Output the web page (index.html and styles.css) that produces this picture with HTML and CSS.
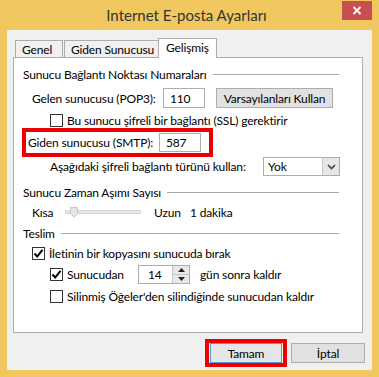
FILE: index.html
```html
<!DOCTYPE html>
<html lang="tr">
<head>
<meta charset="utf-8">
<title>Internet E-posta Ayarları</title>
<link rel="stylesheet" href="styles.css">
</head>
<body>
<div class="window">
  <div class="titlebar">
    <span></span>
    <span class="title">Internet E-posta Ayarları</span>
    <span class="close">
      <svg width="10" height="9" viewBox="0 0 10 9"><path d="M1.5 1 L8.5 8 M8.5 1 L1.5 8" stroke="#fff" stroke-width="1.8"/></svg>
    </span>
  </div>
  <div class="client">
    <div class="tabs">
      <div class="tab">Genel</div>
      <div class="tab">Giden Sunucusu</div>
      <div class="tab active">Gelişmiş</div>
    </div>
    <div class="panel">
      <div class="group"><span>Sunucu Bağlantı Noktası Numaraları</span><span class="rule"></span></div>

      <div class="row r-gelen">
        <span class="lbl">Gelen sunucusu (POP3):</span>
        <span class="input port">110</span>
        <span class="btn defaults">Varsayılanları Kullan</span>
      </div>

      <div class="row r-ssl">
        <span class="cb"></span>
        <span>Bu sunucu şifreli bir bağlantı (SSL) gerektirir</span>
      </div>

      <div class="row r-smtp">
        <span class="lbl">Giden sunucusu (SMTP):</span>
        <span class="input port">587</span>
      </div>

      <div class="row r-enc">
        <span class="enc-lbl">Aşağıdaki şifreli bağlantı türünü kullan:</span>
        <span class="select"><span class="sel-val">Yok</span><span class="sel-btn"><svg width="9" height="6" viewBox="0 0 9 6"><path d="M1 1 L4.5 4.5 L8 1" fill="none" stroke="#444" stroke-width="1.6"/></svg></span></span>
      </div>

      <div class="group g2"><span>Sunucu Zaman Aşımı Sayısı</span><span class="rule"></span></div>

      <div class="row r-time">
        <span class="kisa">Kısa</span>
        <span class="slider">
          <svg width="76" height="12" viewBox="0 0 76 12">
            <rect x="0.5" y="3.5" width="75" height="3" fill="#e7e7e7" stroke="#d6d6d6"/>
            <path d="M5.5 0.5 H12.5 V6.5 L9 10 L5.5 6.5 Z" fill="#e6e6e6" stroke="#c5c5c5"/>
          </svg>
        </span>
        <span class="uzun">Uzun</span>
        <span>1 dakika</span>
      </div>

      <div class="group g3"><span>Teslim</span><span class="rule"></span></div>

      <div class="row r-copy">
        <span class="cb checked"><svg width="11" height="11" viewBox="0 0 11 11"><path d="M1.5 5.5 L4.2 8.5 L9.5 1.8" fill="none" stroke="#000" stroke-width="2"/></svg></span>
        <span>İletinin bir kopyasını sunucuda bırak</span>
      </div>

      <div class="row r-days">
        <span class="cb checked"><svg width="11" height="11" viewBox="0 0 11 11"><path d="M1.5 5.5 L4.2 8.5 L9.5 1.8" fill="none" stroke="#000" stroke-width="2"/></svg></span>
        <span class="days-lbl">Sunucudan</span>
        <span class="spin">
          <span class="spin-val">14</span>
          <span class="spin-btns">
            <span class="sb"><svg width="7" height="4" viewBox="0 0 7 4"><path d="M0 4 L3.5 0 L7 4 Z" fill="#222"/></svg></span>
            <span class="sb"><svg width="7" height="4" viewBox="0 0 7 4"><path d="M0 0 L3.5 4 L7 0 Z" fill="#222"/></svg></span>
          </span>
        </span>
        <span class="after">gün sonra kaldır</span>
      </div>

      <div class="row r-del">
        <span class="cb"></span>
        <span>Silinmiş Öğeler'den silindiğinde sunucudan kaldır</span>
      </div>
    </div>
    <div class="footer">
      <span class="mark"><span class="btn ok">Tamam</span></span>
      <span class="btn cancel">İptal</span>
    </div>
  </div>
</div>
</body>
</html>
```

FILE: styles.css
```css
* { box-sizing: border-box; }
html, body { margin: 0; padding: 0; }
body {
  width: 379px;
  height: 377px;
  background: #f1c860;
  font-family: "Lato", "Noto Sans", sans-serif;
  font-size: 12px;
  letter-spacing: -0.15px;
  color: #000;
  overflow: hidden;
}
.window { width: 379px; height: 377px; }

.titlebar {
  height: 30px;
  display: grid;
  grid-template-columns: 1fr auto 1fr;
  align-items: start;
  padding-right: 7px;
}
.title {
  font-size: 15px;
  letter-spacing: 0;
  color: #333;
  line-height: 30px;
  padding-left: 1px;
}
.close {
  justify-self: end;
  margin-top: 1px;
  width: 30px;
  height: 19px;
  background: #c74f4f;
  display: flex;
  align-items: center;
  justify-content: center;
}

.client {
  margin: 0 7px;
  height: 340px;
  background: #f0f0f0;
  padding: 8px 7px 0 6px;
}

.tabs {
  display: flex;
  align-items: flex-end;
  height: 19px;
  padding-left: 2px;
  position: relative;
  z-index: 1;
}
.tab {
  height: 17px;
  border: 1px solid #acacac;
  border-bottom: none;
  background: #f0f0f0;
  padding: 0 6px;
  line-height: 17px;
  white-space: nowrap;
}
.tab + .tab { margin-left: 1px; }
.tab:nth-child(1) { width: 48px; }
.tab:nth-child(2) { width: 95px; }
.tab.active {
  width: 59px;
  margin-left: -1px;
  height: 20px;
  background: #fff;
  margin-bottom: -1px;
  line-height: 18px;
  padding-left: 7px;
}

.panel {
  margin-right: 2px;
  height: 276px;
  background: #fff;
  border: 1px solid #acacac;
  padding: 8px 0 0 9px;
}

.group {
  display: flex;
  align-items: center;
  height: 16px;
  padding-right: 23px;
}
.rule {
  flex: 1;
  height: 1px;
  background: #a8a8a8;
  margin-left: 6px;
  margin-top: 1px;
}
.g2 { margin-top: 8px; }
.g3 { margin-top: 5px; }

.row { display: flex; align-items: center; white-space: nowrap; }

.lbl { width: 131px; }
.r-gelen { margin-top: 5px; height: 22px; padding-left: 9px; }
.input {
  height: 20px;
  border: 1px solid #abadb3;
  background: #fff;
  display: flex;
  align-items: center;
  padding-left: 6px;
}
.port { width: 42px; }
.btn {
  display: inline-flex;
  align-items: center;
  justify-content: center;
  height: 20px;
  border: 1px solid #adadad;
  background: #e1e1e1;
}
.defaults { width: 117px; margin-left: 11px; }

.r-ssl { margin-top: 4px; height: 15px; padding-left: 27px; }
.cb {
  width: 13px;
  height: 13px;
  border: 1px solid #333;
  background: #fff;
  margin-right: 4px;
  display: inline-flex;
  align-items: center;
  justify-content: center;
  flex: none;
}

.r-smtp {
  align-self: flex-start;
  display: inline-flex;
  margin-left: -1px;
  height: 29px;
  border: 4px solid #ee0000;
  padding: 0 8px 0 2px;
}
.r-smtp .port { height: 19px; }

.r-enc { height: 19px; padding-left: 27px; }
.enc-lbl { width: 213px; }
.select {
  width: 77px;
  height: 19px;
  border: 1px solid #abadb3;
  display: flex;
  align-items: center;
}
.sel-val { flex: 1; padding-left: 4px; }
.sel-btn {
  width: 17px;
  height: 17px;
  background: #e6e6e6;
  border-left: 1px solid #c5c5c5;
  display: flex;
  align-items: center;
  justify-content: center;
}

.r-time { margin-top: 4px; height: 16px; padding-left: 9px; }
.kisa { width: 33px; }
.slider { width: 89px; display: flex; align-items: center; padding-top: 2px; }
.uzun { width: 36px; }

.r-copy { margin-top: 4px; height: 16px; padding-left: 9px; }
.r-days { margin-top: 4px; height: 19px; padding-left: 27px; }
.days-lbl { width: 71px; }
.spin {
  width: 52px;
  height: 19px;
  border: 1px solid #abadb3;
  display: flex;
}
.spin-val { flex: 1; display: flex; align-items: center; padding-left: 9px; }
.spin-btns {
  width: 17px;
  display: flex;
  flex-direction: column;
  border-left: 1px solid #c5c5c5;
}
.sb {
  flex: 1;
  background: #e8e8e8;
  display: flex;
  align-items: center;
  justify-content: center;
}
.sb + .sb { border-top: 1px solid #c5c5c5; }
.after { margin-left: 10px; }

.r-del { margin-top: 4px; height: 16px; padding-left: 27px; }

.footer {
  display: flex;
  justify-content: flex-end;
  align-items: center;
  margin-top: 6px;
  height: 28px;
}
.mark {
  border: 4px solid #ee0000;
  padding: 0 1px;
  display: flex;
}
.ok {
  width: 72px;
  border-color: #5b9bd5;
  background: #e5e5e5;
}
.cancel { width: 74px; margin-left: 4px; }
```
